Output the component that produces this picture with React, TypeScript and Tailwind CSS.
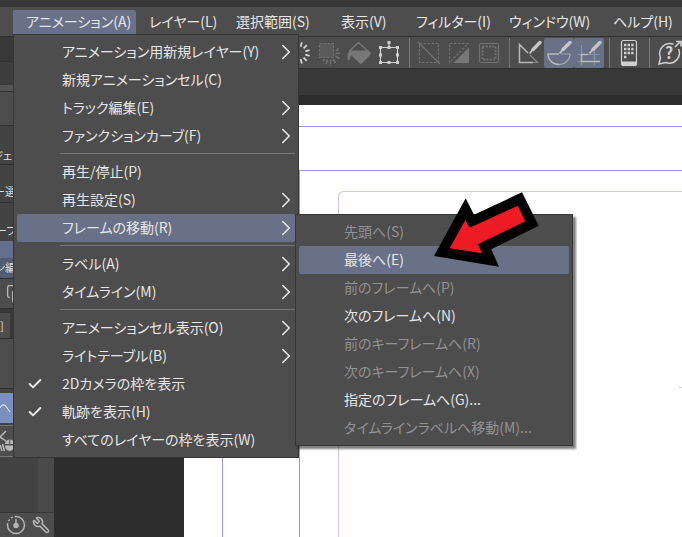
import type { ReactNode } from 'react';
import { Check, ChevronRight, Copy, Wrench } from 'lucide-react';

type MenuEntry = {
  label: string;
  submenu?: boolean;
  checked?: boolean;
  disabled?: boolean;
  active?: boolean;
};

const MENU_BAR = [
  'アニメーション(A)',
  'レイヤー(L)',
  '選択範囲(S)',
  '表示(V)',
  'フィルター(I)',
  'ウィンドウ(W)',
  'ヘルプ(H)',
];

const ANIMATION_MENU: MenuEntry[][] = [
  [
    { label: 'アニメーション用新規レイヤー(Y)', submenu: true },
    { label: '新規アニメーションセル(C)' },
    { label: 'トラック編集(E)', submenu: true },
    { label: 'ファンクションカーブ(F)', submenu: true },
  ],
  [
    { label: '再生/停止(P)' },
    { label: '再生設定(S)', submenu: true },
    { label: 'フレームの移動(R)', submenu: true, active: true },
  ],
  [
    { label: 'ラベル(A)', submenu: true },
    { label: 'タイムライン(M)', submenu: true },
  ],
  [
    { label: 'アニメーションセル表示(O)', submenu: true },
    { label: 'ライトテーブル(B)', submenu: true },
    { label: '2Dカメラの枠を表示', checked: true },
    { label: '軌跡を表示(H)', checked: true },
    { label: 'すべてのレイヤーの枠を表示(W)' },
  ],
];

const FRAME_MENU: MenuEntry[] = [
  { label: '先頭へ(S)', disabled: true },
  { label: '最後へ(E)', active: true },
  { label: '前のフレームへ(P)', disabled: true },
  { label: '次のフレームへ(N)' },
  { label: '前のキーフレームへ(R)', disabled: true },
  { label: '次のキーフレームへ(X)', disabled: true },
  { label: '指定のフレームへ(G)...' },
  { label: 'タイムラインラベルへ移動(M)...', disabled: true },
];

const RAYS = [0, 30, 60, 90, 120, 150, 180, 210, 240, 270, 300, 330];

function MenuItem({ entry }: { entry: MenuEntry }) {
  return (
    <button
      type="button"
      role="menuitem"
      disabled={entry.disabled}
      className={`flex h-7 w-full items-center rounded-xs text-left whitespace-nowrap ${
        entry.active ? 'bg-[#687188]' : ''
      } ${entry.disabled ? 'text-[#929292]' : 'text-[#e6e6e6]'}`}
    >
      <span className="flex w-[45px] shrink-0 pl-2.5">
        {entry.checked && <Check className="h-4 w-4" strokeWidth={3} />}
      </span>
      <span className="flex-1 pb-0.5">{entry.label}</span>
      {entry.submenu && <ChevronRight className="-mr-1 h-[26px] w-[26px]" strokeWidth={1.5} />}
    </button>
  );
}

function Tool({ name, on, children }: { name: string; on?: boolean; children: ReactNode }) {
  return (
    <button
      type="button"
      aria-label={name}
      className={`h-[30px] w-[30px] shrink-0 rounded-xs ${on ? 'bg-[#687188]' : ''}`}
    >
      <svg viewBox="0 0 30 30" className="h-[30px] w-[30px]" fill="none" stroke="#b9b9b9" strokeWidth="1.2">
        {children}
      </svg>
    </button>
  );
}

function Divider() {
  return (
    <div className="flex h-[30px] w-2.5 shrink-0 justify-center">
      <div className="w-px bg-[#777777]" />
    </div>
  );
}

function Pen() {
  return (
    <g>
      <path d="M19 11.5 26 4.5" stroke="#c6c6c6" strokeWidth="3.4" strokeLinecap="round" />
      <path d="M15.5 15.5 18.5 12" stroke="#c6c6c6" strokeWidth="1.8" />
    </g>
  );
}

function Toolbar() {
  return (
    <div className="flex h-8 overflow-hidden border-b border-[#303030] bg-[#4d4d4d] pt-px pl-[230px]">
      <Tool name="処理中">
        {RAYS.map((deg) => (
          <path key={deg} d="M21.5 15H26" stroke="#d5d5d5" strokeWidth="1.8" transform={`rotate(${deg + 15} 15 15)`} />
        ))}
      </Tool>
      <Tool name="選択範囲外を消去">
        <g stroke="#717171">
          <rect x="5.5" y="5.5" width="14" height="14" fill="#5a5a5a" strokeDasharray="2.5 1.5" />
          <path
            d="M24.5 10.5 22 13M21.5 15.5l4.5-.5M21 18l4.5 2.5M19 21l2.5 4M16.5 21.5v5M13.5 21.5l-1.5 4.5M10.5 21l-1.5 2"
            strokeWidth="1.6"
          />
        </g>
      </Tool>
      <Tool name="塗りつぶし">
        <path d="M14.5 4.5 5 13.5M14.5 4.5 26.5 15.5" stroke="#777777" strokeWidth="1.5" />
        <path
          d="M6 12.500h18l3 3.500-10 10.500L7.500 17.500c-1.500 1-1 3-2 4.500-2 1-2.200-1.500-2-3.500 0-3 1-4.500 2.500-6z"
          fill="#777777"
          stroke="none"
        />
      </Tool>
      <Tool name="拡大・縮小・回転">
        <g stroke="#cfcfcf">
          <path d="M6.5 9.5h17v15h-17zM15 4v5.500" />
          <path
            d="M6.5 8v3M23.5 8v3M6.5 15.5v3M23.5 15.5v3M6.5 23v3M23.5 23v3M15 8v3M15 23v3M15 3v3"
            strokeWidth="3"
          />
        </g>
      </Tool>
      <Divider />
      <Tool name="選択を解除">
        <g stroke="#717171">
          <rect x="5.5" y="5.5" width="19" height="19" strokeDasharray="2.5 1.5" />
          <path d="M4 4l22 22" />
        </g>
      </Tool>
      <Tool name="選択範囲を反転">
        <g stroke="#717171">
          <path d="M24.5 5.500h-19v19L24.5 5.500" strokeDasharray="2.5 1.5" />
          <path d="M25 9.500V25H9.500z" fill="#777777" stroke="none" />
        </g>
      </Tool>
      <Tool name="選択範囲の境界線">
        <g stroke="#717171">
          <rect x="5.5" y="5.5" width="19" height="19" rx="1.5" />
          <rect x="8.5" y="8.5" width="13" height="13" strokeWidth="2" strokeDasharray="2 1.3" />
        </g>
      </Tool>
      <Divider />
      <Tool name="定規にスナップ">
        <path d="M14 15 5.500 6.500v18H19" strokeWidth="1.5" />
        <path d="M16 17l7.500 7.500H19" stroke="#8a8a8a" />
        <Pen />
      </Tool>
      <Tool name="特殊定規にスナップ" on>
        <path d="M15 16H4c0 6 5 10.500 11 10.500" strokeWidth="1.5" />
        <path d="M15 26.500c6 0 11-4.500 11-10.500h-9" stroke="#a0a4ae" />
        <Pen />
      </Tool>
      <Tool name="グリッドにスナップ" on>
        <path d="M7.500 7v20M20.500 13v14M4 16.500h22M4 23.500h4" stroke="#8990a0" />
        <path d="M14 16.500H7.500v7H26" strokeWidth="1.5" />
        <Pen />
      </Tool>
      <Divider />
      <Tool name="コンパニオンモード">
        <rect x="7.5" y="2.5" width="15" height="25" rx="2" stroke="#cfcfcf" />
        <path d="M7.500 23.500h15V26a2 2 0 0 1-2 2h-11a2 2 0 0 1-2-2z" fill="#cfcfcf" stroke="none" />
        <path d="M10 7h10M10 11h10M10 15h10M10 19h3" stroke="#cfcfcf" strokeWidth="2.6" strokeDasharray="2.4 1.2" />
      </Tool>
      <Divider />
      <Tool name="サポート">
        <path d="M19.500 6.300A10 10 0 0 0 6.500 19.500L5 26l7-1.500A10 10 0 0 0 24.500 11" stroke="#cfcfcf" strokeWidth="1.5" />
        <path d="M21 9l5-5M22 3.500h5v5" stroke="#cfcfcf" strokeWidth="1.6" />
        <text x="15" y="21" textAnchor="middle" fill="#cfcfcf" stroke="none" className="text-base font-bold">
          ?
        </text>
      </Tool>
    </div>
  );
}

function ToolPalette() {
  return (
    <aside className="flex w-[54px] shrink-0 flex-col overflow-hidden bg-[#434343] text-[11px] text-[#dddddd]">
      <div className="h-[25px] border-b border-[#303030] bg-[#383838]" />
      <div className="h-[23px] bg-[#3e3e3e]" />
      <div className="h-[7px] border-b border-[#303030] bg-[#555555]" />
      <div className="h-[34px] border-b border-[#303030] bg-[#4d4d4d]" />
      <div className="flex h-[39px] border-b border-[#303030]">
        <span className="flex w-3 items-end justify-end whitespace-nowrap">ジェ</span>
      </div>
      <div className="flex h-[38px] border-b border-[#303030]">
        <span className="flex w-4 items-end justify-end pb-0.5 whitespace-nowrap">ー選</span>
      </div>
      <div className="flex h-[38px]">
        <span className="flex w-4 items-end justify-end pb-0.5 whitespace-nowrap">ーブ</span>
      </div>
      <div className="flex h-[38px] flex-col justify-end border-b border-[#303030] bg-[#646f8b]">
        <div className="flex h-5 items-center bg-[#545c72]">
          <span className="flex w-4 justify-end whitespace-nowrap">ン編</span>
        </div>
      </div>
      <div className="flex h-[30px] items-center border-b border-[#303030] bg-[#4d4d4d] pl-1.5">
        <Copy className="h-5 w-5 text-[#bbbbbb]" strokeWidth={1.5} />
      </div>
      <div className="flex h-[30px] items-end border-b border-[#303030] bg-[#383838]">
        <div className="flex h-[25px] w-2.5 items-center bg-[#4d4d4d]">]</div>
      </div>
      <div className="h-[50px] border-b border-[#303030] bg-[#4d4d4d]" />
      <div className="mt-1 flex h-[30px] items-center bg-[#7b8ebc]">
        <svg viewBox="0 0 12 16" className="h-4 w-3" fill="none" stroke="#f4f4f4">
          <path d="M0 8 2 5h3l5 7" />
        </svg>
      </div>
      <div className="mt-0.5 flex h-8 items-center border-y border-[#777777] bg-[#4d4d4d]">
        <svg viewBox="0 0 16 26" className="h-[26px] w-4" fill="none" stroke="#bbbbbb" strokeWidth="1.5">
          <path d="M6 3 0 9l6 4M0 17l2 6M2.500 16l2 7" />
          <path d="M5 16c.5-6 9-6 9.500 0zM5 17.500h9.500c0 7-9.500 7-9.500 0z" fill="#bbbbbb" stroke="none" />
          <path d="M9.750 11v5.500" stroke="#4d4d4d" strokeWidth="1" />
        </svg>
      </div>
      <div className="flex flex-1 justify-end border-b border-[#383838]">
        <div className="w-4 bg-[#4a4a4a]" />
      </div>
      <div className="flex h-6 items-center gap-1.5 bg-[#4d4d4d] pl-1.5">
        <svg viewBox="0 0 20 20" className="h-5 w-5" fill="none" stroke="#b5b5b5" strokeWidth="1.5">
          <path d="M10 1.500a8.500 8.500 0 1 1-8.500 8.500" />
          <path d="M1.500 10A8.500 8.500 0 0 1 10 1.500" strokeDasharray="2 2" />
          <path d="M10 4v6" />
          <circle cx="10" cy="10.5" r="2" fill="#b5b5b5" />
        </svg>
        <Wrench className="h-[18px] w-[18px] -scale-x-100 text-[#b5b5b5]" strokeWidth={2} />
      </div>
    </aside>
  );
}

function Canvas() {
  return (
    <div className="flex flex-1 bg-[#2d2d2d] pt-2.5 pl-[130px]">
      <div className="flex flex-1 bg-white pt-[21px] pl-[38px]">
        <div className="flex flex-1 border-t border-l border-[#9c95d0] pt-[43px] pl-[76px]">
          <div className="flex flex-1 border-t border-l border-[#9c95d0] pt-5 pl-[38px]">
            <div className="flex flex-1 flex-col items-end rounded-tl-md border-t border-l border-[#cac6e6] pt-[195px]">
              <div className="h-px w-[3px] bg-[#cac6e6]" />
            </div>
          </div>
        </div>
      </div>
    </div>
  );
}

export default function App() {
  return (
    <div className="relative flex min-h-screen flex-col overflow-hidden bg-[#2d2d2d] font-['Noto_Sans_CJK_JP',sans-serif] text-sm text-[#e6e6e6] [font-feature-settings:'palt']">
      <div className="h-[7px] bg-[#373737]" />
      <nav className="grid h-[30px] grid-cols-[123px_87px_105px_75px_93px_104px_auto] items-center border-b border-[#303030] bg-[#4d4d4d] pl-[13px]">
        {MENU_BAR.map((label, i) => (
          <button
            key={label}
            type="button"
            className={`h-6 rounded-t-xs pb-0.5 pl-[13px] text-left whitespace-nowrap ${i === 0 ? 'bg-[#687188]' : ''}`}
          >
            {label}
          </button>
        ))}
      </nav>

      <div className="flex flex-1">
        <ToolPalette />
        <main className="flex min-w-0 flex-1 flex-col">
          <Toolbar />
          <div className="h-[26px] bg-[#383838]" />
          <Canvas />
        </main>
      </div>

      {/* Animation menu */}
      <div role="menu" className="absolute top-[34px] left-[13px] w-[286px] border border-[#363636] bg-[#4d4d4d] p-[3px]">
        {ANIMATION_MENU.map((group, i) => (
          <div key={i}>
            {i > 0 && (
              <div className="h-2 pt-[3px] pl-[43px]">
                <div className="h-px bg-[#777777]" />
              </div>
            )}
            {group.map((entry) => (
              <MenuItem key={entry.label} entry={entry} />
            ))}
          </div>
        ))}
      </div>

      {/* Frame submenu */}
      <div
        role="menu"
        className="absolute top-[214px] left-[295px] w-[278px] border border-[#363636] bg-[#4d4d4d] p-[3px] shadow-[3px_3px_2px_rgba(0,0,0,0.5)]"
      >
        {FRAME_MENU.map((entry) => (
          <MenuItem key={entry.label} entry={entry} />
        ))}
      </div>

      {/* Red pointer */}
      <svg viewBox="434 192 106 76" className="absolute top-[192px] left-[434px] h-[76px] w-[106px]">
        <path d="M434 256 465.700 198.300 474 214.700 522 192.300 538.700 225.700 491.300 249.300 499 266.700z" fill="#000000" />
        <path d="M449.700 248.300 465.300 220 469.700 227.700 517.700 205.700 525.300 221.300 478 244.300 482 253.300z" fill="#ed1c24" />
      </svg>
    </div>
  );
}
